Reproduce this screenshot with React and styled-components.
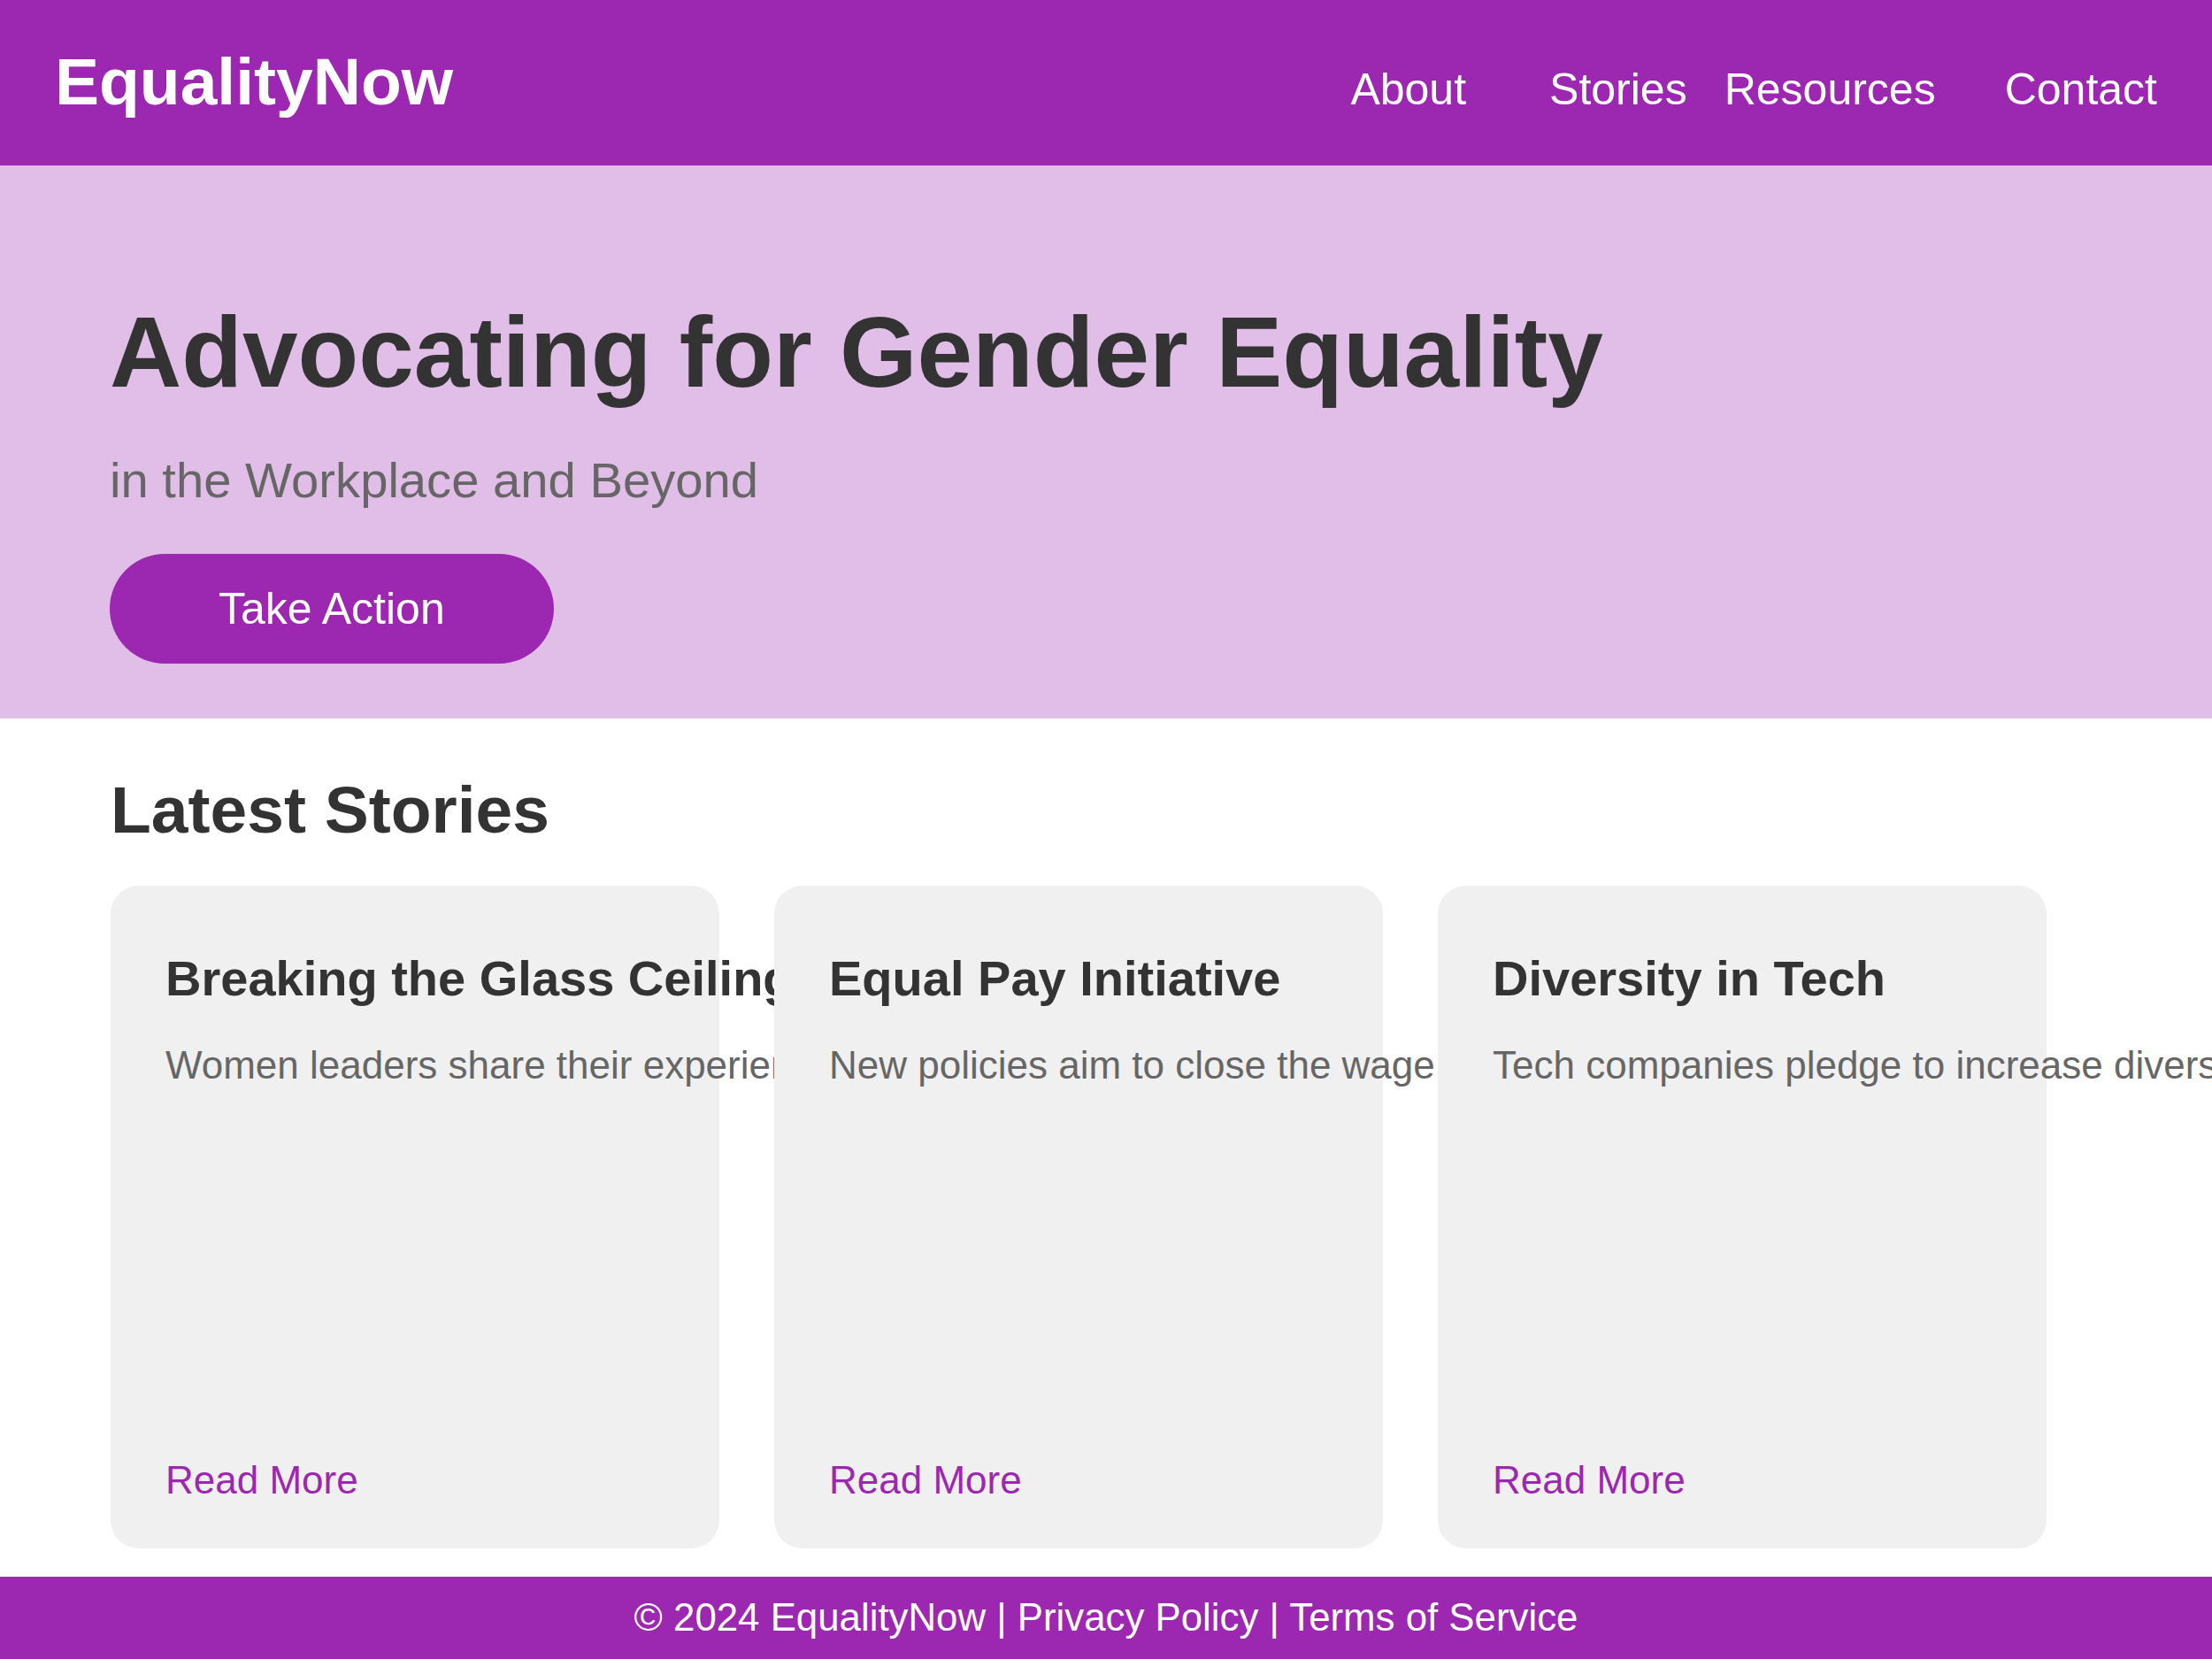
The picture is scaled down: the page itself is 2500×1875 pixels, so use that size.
import React from 'react';
import styled, { createGlobalStyle } from 'styled-components';

const GlobalStyle = createGlobalStyle`
  html, body {
    margin: 0;
    padding: 0;
    background: #ffffff;
    font-family: "Liberation Sans", Arial, sans-serif;
    color: #333333;
  }
  * {
    box-sizing: border-box;
  }
`;

const Page = styled.div`
  overflow: clip;
  min-height: 100vh;
`;

const Header = styled.header`
  height: 187px;
  padding: 49px 62px 0;
  background: #9c27b0;
  display: flex;
  align-items: baseline;
  justify-content: space-between;
`;

const Logo = styled.div`
  font-size: 75px;
  font-weight: 700;
  color: #ffffff;
`;

const Nav = styled.nav`
  display: flex;
  align-items: baseline;
`;

const NavLink = styled.a`
  font-size: 50px;
  color: #ffffff;
  text-decoration: none;
  margin-left: ${({ $space }) => $space || 0}px;
`;

const Hero = styled.section`
  background: #e1bee7;
  padding: 146px 124px 62px;
`;

const HeroTitle = styled.h1`
  margin: 0;
  font-size: 112.5px;
  font-weight: 700;
  color: #333333;
`;

const HeroSub = styled.p`
  margin: 47px 0 0;
  font-size: 56.2px;
  color: #666666;
`;

const ActionButton = styled.button`
  margin-top: 51px;
  padding: 33px 123px;
  border: none;
  border-radius: 999px;
  background: #9c27b0;
  color: #ffffff;
  font-family: inherit;
  font-size: 50px;
  cursor: pointer;
`;

const Stories = styled.section`
  padding: 60px 125px 32px;
`;

const SectionTitle = styled.h2`
  margin: 0 0 43px;
  font-size: 75px;
  font-weight: 700;
  color: #333333;
`;

const CardGrid = styled.div`
  display: grid;
  grid-template-columns: repeat(3, 688px);
  gap: 62px;
`;

const Card = styled.article`
  height: 749px;
  padding: 72px 62px 52px;
  background: #f0f0f0;
  border-radius: 32px;
  display: flex;
  flex-direction: column;
  white-space: nowrap;
`;

const CardTitle = styled.h3`
  margin: 0;
  font-size: 56px;
  font-weight: 700;
  color: #333333;
`;

const CardText = styled.p`
  margin: 41px 0 0;
  font-size: 44px;
  color: #666666;
`;

const ReadMore = styled.a`
  margin-top: auto;
  font-size: 44px;
  color: #9c27b0;
  text-decoration: none;
`;

const Footer = styled.footer`
  background: #9c27b0;
  color: #ffffff;
  text-align: center;
  font-size: 43.8px;
  padding: 21px 0 23px;
`;

const navItems = [
  { label: 'About', space: 0 },
  { label: 'Stories', space: 94 },
  { label: 'Resources', space: 42 },
  { label: 'Contact', space: 78 },
];

const stories = [
  {
    title: 'Breaking the Glass Ceiling',
    text: 'Women leaders share their experiences and insights',
  },
  {
    title: 'Equal Pay Initiative',
    text: 'New policies aim to close the wage gap',
  },
  {
    title: 'Diversity in Tech',
    text: 'Tech companies pledge to increase diversity in hiring',
  },
];

const App = () => (
  <Page>
    <GlobalStyle />
    <Header>
      <Logo>EqualityNow</Logo>
      <Nav>
        {navItems.map((item) => (
          <NavLink key={item.label} href="#" $space={item.space}>
            {item.label}
          </NavLink>
        ))}
      </Nav>
    </Header>

    <Hero>
      <HeroTitle>Advocating for Gender Equality</HeroTitle>
      <HeroSub>in the Workplace and Beyond</HeroSub>
      <ActionButton>Take Action</ActionButton>
    </Hero>

    <Stories>
      <SectionTitle>Latest Stories</SectionTitle>
      <CardGrid>
        {stories.map((story) => (
          <Card key={story.title}>
            <CardTitle>{story.title}</CardTitle>
            <CardText>{story.text}</CardText>
            <ReadMore href="#">Read More</ReadMore>
          </Card>
        ))}
      </CardGrid>
    </Stories>

    <Footer>© 2024 EqualityNow | Privacy Policy | Terms of Service</Footer>
  </Page>
);

export default App;
